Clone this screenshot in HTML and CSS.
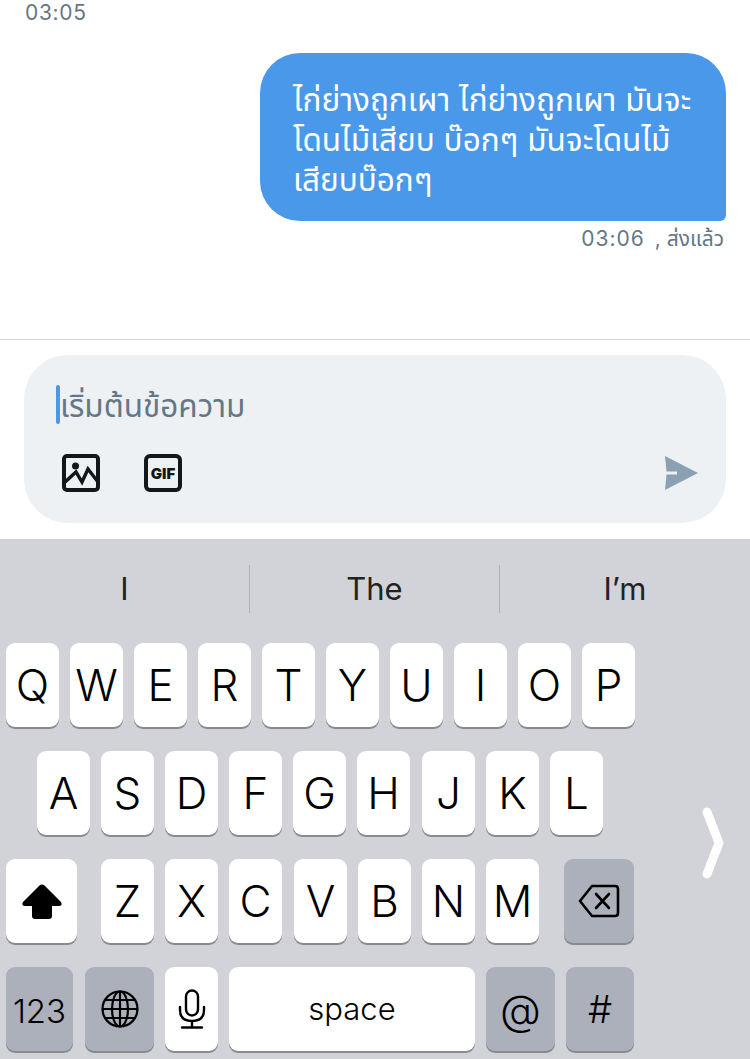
FILE: index.html
```html
<!DOCTYPE html>
<html>
<head>
<title>Messages</title>
<link rel="stylesheet" href="styles.css">
</head>
<body>

<div class="thread">
  <div class="time-in">03:05</div>
  <div class="bubble">ไก่ย่างถูกเผา ไก่ย่างถูกเผา มันจะ<br>โดนไม้เสียบ บ๊อกๆ มันจะโดนไม้<br>เสียบบ๊อกๆ</div>
  <div class="meta"><span class="meta-time">03:06</span> , ส่งแล้ว</div>
</div>

<div class="composer">
  <div class="input-box">
    <div class="input-line">
      <span class="caret"></span>
      <span class="placeholder">เริ่มต้นข้อความ</span>
    </div>
    <div class="tools">
      <svg class="tool-icon" viewBox="0 0 38 38">
        <rect x="2" y="2" width="34" height="34" rx="3" fill="none" stroke="#14171a" stroke-width="4"/>
        <circle cx="13.5" cy="12" r="3.5" fill="#14171a"/>
        <path d="M2 29 L14 18 L20 28 L26 15 L36 28" fill="none" stroke="#14171a" stroke-width="3.4"/>
      </svg>
      <svg class="tool-icon" viewBox="0 0 38 38">
        <rect x="2" y="2" width="34" height="34" rx="4" fill="none" stroke="#14171a" stroke-width="4"/>
        <text x="19" y="24.5" class="gif-text" text-anchor="middle">GIF</text>
      </svg>
      <svg class="send-icon" viewBox="0 0 33 34">
        <path d="M0 0 L33 17 L0 34 L1.5 18.5 L12 18.5 L12 15.5 L1.5 15.5 Z" fill="#8aa0b3"/>
      </svg>
    </div>
  </div>
</div>

<div class="keyboard">
  <div class="suggestions">
    <div class="suggestion">I</div>
    <div class="suggestion">The</div>
    <div class="suggestion">I’m</div>
  </div>
  <div class="keyboard-body">
    <div class="keys">
      <div class="row">
        <div class="key">Q</div><div class="key">W</div><div class="key">E</div><div class="key">R</div><div class="key">T</div><div class="key">Y</div><div class="key">U</div><div class="key">I</div><div class="key">O</div><div class="key">P</div>
      </div>
      <div class="row row-home">
        <div class="key">A</div><div class="key">S</div><div class="key">D</div><div class="key">F</div><div class="key">G</div><div class="key">H</div><div class="key key-nudge">J</div><div class="key">K</div><div class="key">L</div>
      </div>
      <div class="row">
        <div class="key key-shift">
          <svg width="40" height="35" viewBox="0 0 40 35"><path d="M17.5 1.5 Q20 -0.5 22.5 1.5 L39 18 Q41 22 37 22 L30 22 L30 32 Q30 35 27 35 L13 35 Q10 35 10 32 L10 22 L3 22 Q-1 22 1 18 Z" fill="#000"/></svg>
        </div>
        <div class="key">Z</div><div class="key">X</div><div class="key">C</div><div class="key key-nudge">V</div><div class="key">B</div><div class="key">N</div><div class="key">M</div>
        <div class="key key-dark key-delete">
          <svg width="42" height="34" viewBox="0 0 42 34"><path d="M14 2 L37 2 Q40 2 40 5 L40 29 Q40 32 37 32 L14 32 L2 17 Z" fill="none" stroke="#000" stroke-width="2.6" stroke-linejoin="round"/><path d="M18 10 L31 24 M31 10 L18 24" stroke="#000" stroke-width="2.6" stroke-linecap="round"/></svg>
        </div>
      </div>
      <div class="row row-bottom">
        <div class="key key-dark key-num">123</div>
        <div class="key key-dark key-globe">
          <svg width="38" height="38" viewBox="0 0 38 38" fill="none" stroke="#000" stroke-width="2.2"><circle cx="19" cy="19" r="17.5"/><ellipse cx="19" cy="19" rx="8" ry="17.5"/><path d="M19 1.5 V36.5 M1.5 19 H36.5 M4 10 H34 M4 28 H34"/></svg>
        </div>
        <div class="key">
          <svg width="28" height="40" viewBox="0 0 28 40" fill="none" stroke="#000" stroke-width="2.4" stroke-linecap="round"><rect x="8" y="1.5" width="12" height="25" rx="6"/><path d="M2 18 V21 Q2 32 14 32 Q26 32 26 21 V18 M14 32 V38 M4 38.5 H24"/></svg>
        </div>
        <div class="key key-space">space</div>
        <div class="key key-dark key-at">@</div>
        <div class="key key-dark key-hash">#</div>
      </div>
    </div>
    <div class="side">
      <svg width="22" height="72" viewBox="0 0 22 72"><path d="M5 5 L17 36 L5 67" fill="none" stroke="#fff" stroke-width="9" stroke-linecap="round" stroke-linejoin="round"/></svg>
    </div>
  </div>
</div>

</body>
</html>
```

FILE: styles.css
```css
html, body {
  margin: 0;
  padding: 0;
}

body {
  width: 750px;
  height: 1059px;
  overflow: hidden;
  background-color: #fff;
  font-family: "Inter", "Liberation Sans", "Noto Sans", "Noto Sans Thai", "Noto Sans CJK SC", sans-serif;
  color: #000;
}

.thread {
  height: 340px;
  box-sizing: border-box;
  display: flex;
  flex-direction: column;
  border-bottom: 1px solid #d8d8da;
}

.time-in {
  height: 53px;
  box-sizing: border-box;
  padding-left: 25px;
  font-size: 21px;
  line-height: 26px;
  letter-spacing: 0.7px;
  color: #657786;
}

.bubble {
  align-self: flex-end;
  width: 466px;
  height: 168px;
  box-sizing: border-box;
  margin-right: 24px;
  padding: 27px 0 0 33px;
  background-color: #4a98ea;
  border-radius: 40px 40px 6px 40px;
  color: #fff;
  font-size: 31.5px;
  line-height: 40px;
}

.meta {
  margin: 5px 26px 0 0;
  text-align: right;
  font-size: 21px;
  line-height: 26px;
  color: #657786;
}

.meta-time {
  letter-spacing: 1px;
  margin-right: 4px;
}

.composer {
  height: 199px;
  box-sizing: border-box;
  padding: 15px 24px;
}

.input-box {
  height: 168px;
  box-sizing: border-box;
  padding: 30px 28px 0 32px;
  background-color: #eef1f3;
  border-radius: 44px;
}

.input-line {
  display: flex;
  align-items: center;
  height: 39px;
}

.caret {
  width: 4px;
  height: 39px;
  background-color: #4a98ea;
  border-radius: 2px;
}

.placeholder {
  padding-top: 5px;
  font-size: 31.5px;
  color: #657786;
}

.tools {
  display: flex;
  align-items: center;
  gap: 44px;
  margin-top: 30px;
  padding-left: 6px;
}

.tool-icon {
  width: 38px;
  height: 38px;
}

.gif-text {
  font-size: 15px;
  font-weight: 900;
  fill: #14171a;
}

.send-icon {
  width: 33px;
  height: 34px;
  margin-left: auto;
}

.keyboard {
  height: 520px;
  background-color: #d1d3d9;
}

.suggestions {
  display: flex;
  align-items: center;
  height: 104px;
}

.suggestion {
  width: 250px;
  height: 48px;
  margin-bottom: 4px;
  line-height: 48px;
  text-align: center;
  font-size: 31px;
  color: #222;
  box-sizing: border-box;
  border-left: 1px solid #b0b2b8;
}

.suggestion:first-child {
  width: 249px;
  border-left: none;
}

.suggestion:last-child {
  width: 251px;
}

.keyboard-body {
  display: flex;
}

.keys {
  width: 640px;
  display: flex;
  flex-direction: column;
  gap: 24px;
  padding-left: 6px;
  box-sizing: border-box;
}

.row {
  display: flex;
  gap: 11px;
}

.row-home {
  padding-left: 31px;
}

.key {
  width: 53px;
  height: 84px;
  flex: none;
  display: flex;
  align-items: center;
  justify-content: center;
  background-color: #fff;
  border-radius: 9px;
  box-shadow: 0 2px 0 #898a8e;
  font-size: 44px;
  font-weight: 300;
}

.key-nudge {
  margin-left: 1px;
}

.key-dark {
  background-color: #acb0bb;
}

.key-shift {
  width: 71px;
  margin-right: 13px;
}

.key-delete {
  width: 70px;
  margin-left: 14px;
}

.key-num {
  width: 67px;
  height: 81px;
  padding-top: 3px;
  margin-right: 1px;
  font-size: 33px;
}

.key-globe,
.key-at {
  width: 69px;
}

.key-space {
  width: 246px;
  height: 82px;
  padding-bottom: 2px;
  font-size: 31px;
}

.key-hash {
  width: 68px;
}

.key-at {
  font-size: 42px;
}

.key-hash {
  font-size: 38px;
}

.side {
  flex: 1;
  padding: 164px 0 0 62px;
}
```
